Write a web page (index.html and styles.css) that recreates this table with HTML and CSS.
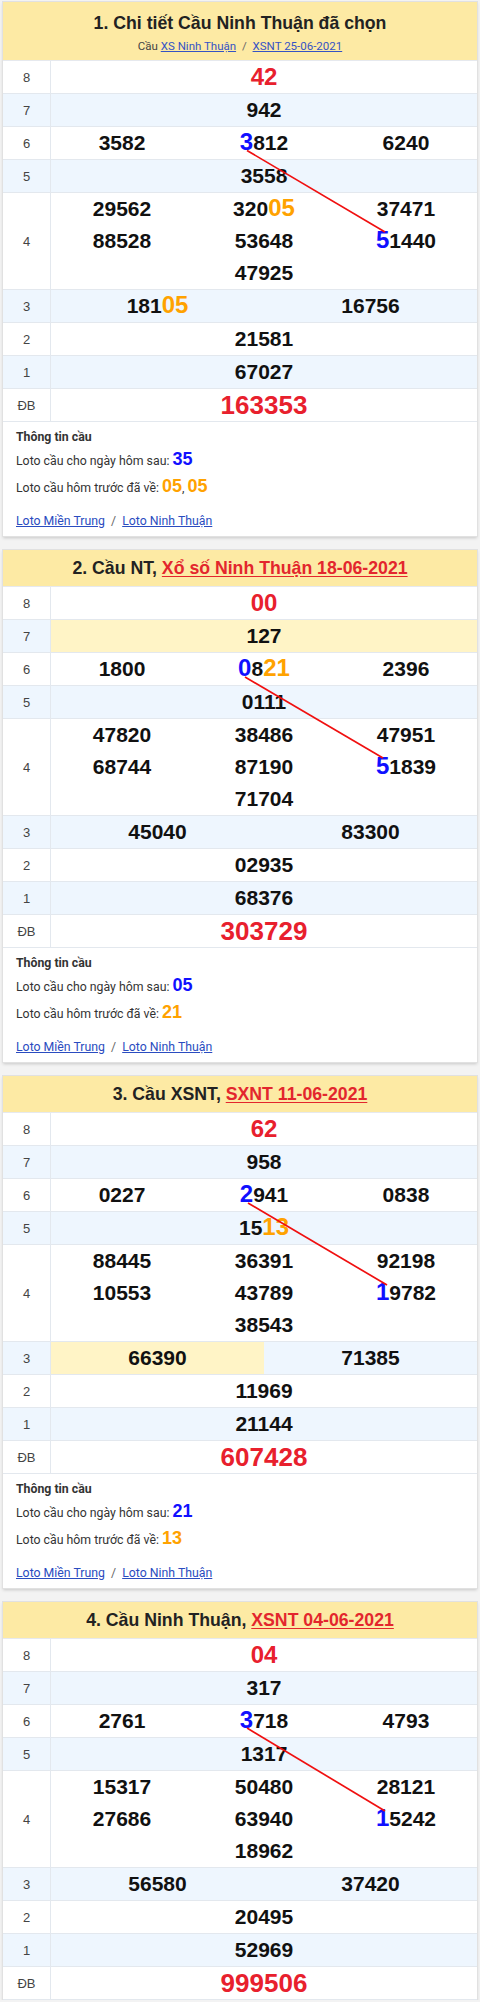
FILE: index.html
```html
<!DOCTYPE html>
<html lang="vi">
<head>
<meta charset="utf-8">
<title>Cầu Ninh Thuận</title>
<link rel="stylesheet" href="styles.css">
</head>
<body>
<main class="page">

<section class="card">
  <header class="head head-tall">
    <h2 class="title">1. Chi tiết Cầu Ninh Thuận đã chọn</h2>
    <div class="sub">Cầu <a href="#">XS Ninh Thuận</a> <span class="sep">/</span> <a href="#">XSNT 25-06-2021</a></div>
  </header>
  <div class="board">
    <div class="row"><div class="lbl">8</div><div class="nums"><span class="n red">42</span></div></div>
    <div class="row alt"><div class="lbl">7</div><div class="nums"><span class="n">942</span></div></div>
    <div class="row"><div class="lbl">6</div><div class="nums c3"><span class="n">3582</span><span class="n"><b class="blue">3</b>812</span><span class="n">6240</span></div></div>
    <div class="row alt"><div class="lbl">5</div><div class="nums"><span class="n">3558</span></div></div>
    <div class="row"><div class="lbl">4</div><div class="nums c3"><span class="n">29562</span><span class="n">320<b class="orange">05</b></span><span class="n">37471</span><span class="n">88528</span><span class="n">53648</span><span class="n"><b class="blue">5</b>1440</span><span class="n">47925</span></div></div>
    <div class="row alt"><div class="lbl">3</div><div class="nums c2"><span class="n">181<b class="orange">05</b></span><span class="n">16756</span></div></div>
    <div class="row"><div class="lbl">2</div><div class="nums"><span class="n">21581</span></div></div>
    <div class="row alt"><div class="lbl">1</div><div class="nums"><span class="n">67027</span></div></div>
    <div class="row"><div class="lbl">ĐB</div><div class="nums"><span class="n db">163353</span></div></div>
    <svg class="bridge" aria-hidden="true"><line x1="244" y1="89.5" x2="382" y2="171"/></svg>
  </div>
  <div class="info">
    <div class="info-title">Thông tin cầu</div>
    <div class="info-line">Loto cầu cho ngày hôm sau: <b class="v blue">35</b></div>
    <div class="info-line">Loto cầu hôm trước đã về: <b class="v orange">05</b>, <b class="v orange">05</b></div>
    <div class="links"><a href="#">Loto Miền Trung</a> <span class="sep">/</span> <a href="#">Loto Ninh Thuận</a></div>
  </div>
</section>

<section class="card">
  <header class="head">
    <h2 class="title">2. Cầu NT, <a class="red-link" href="#">Xổ số Ninh Thuận 18-06-2021</a></h2>
  </header>
  <div class="board">
    <div class="row"><div class="lbl">8</div><div class="nums"><span class="n red">00</span></div></div>
    <div class="row alt"><div class="lbl">7</div><div class="nums"><span class="n hit">127</span></div></div>
    <div class="row"><div class="lbl">6</div><div class="nums c3"><span class="n">1800</span><span class="n"><b class="blue">0</b>8<b class="orange">21</b></span><span class="n">2396</span></div></div>
    <div class="row alt"><div class="lbl">5</div><div class="nums"><span class="n">0111</span></div></div>
    <div class="row"><div class="lbl">4</div><div class="nums c3"><span class="n">47820</span><span class="n">38486</span><span class="n">47951</span><span class="n">68744</span><span class="n">87190</span><span class="n"><b class="blue">5</b>1839</span><span class="n">71704</span></div></div>
    <div class="row alt"><div class="lbl">3</div><div class="nums c2"><span class="n">45040</span><span class="n">83300</span></div></div>
    <div class="row"><div class="lbl">2</div><div class="nums"><span class="n">02935</span></div></div>
    <div class="row alt"><div class="lbl">1</div><div class="nums"><span class="n">68376</span></div></div>
    <div class="row"><div class="lbl">ĐB</div><div class="nums"><span class="n db">303729</span></div></div>
    <svg class="bridge" aria-hidden="true"><line x1="242" y1="90" x2="380" y2="171"/></svg>
  </div>
  <div class="info">
    <div class="info-title">Thông tin cầu</div>
    <div class="info-line">Loto cầu cho ngày hôm sau: <b class="v blue">05</b></div>
    <div class="info-line">Loto cầu hôm trước đã về: <b class="v orange">21</b></div>
    <div class="links"><a href="#">Loto Miền Trung</a> <span class="sep">/</span> <a href="#">Loto Ninh Thuận</a></div>
  </div>
</section>

<section class="card">
  <header class="head">
    <h2 class="title">3. Cầu XSNT, <a class="red-link" href="#">SXNT 11-06-2021</a></h2>
  </header>
  <div class="board">
    <div class="row"><div class="lbl">8</div><div class="nums"><span class="n red">62</span></div></div>
    <div class="row alt"><div class="lbl">7</div><div class="nums"><span class="n">958</span></div></div>
    <div class="row"><div class="lbl">6</div><div class="nums c3"><span class="n">0227</span><span class="n"><b class="blue">2</b>941</span><span class="n">0838</span></div></div>
    <div class="row alt"><div class="lbl">5</div><div class="nums"><span class="n">15<b class="orange">13</b></span></div></div>
    <div class="row"><div class="lbl">4</div><div class="nums c3"><span class="n">88445</span><span class="n">36391</span><span class="n">92198</span><span class="n">10553</span><span class="n">43789</span><span class="n"><b class="blue">1</b>9782</span><span class="n">38543</span></div></div>
    <div class="row alt"><div class="lbl">3</div><div class="nums c2"><span class="n hit">66390</span><span class="n">71385</span></div></div>
    <div class="row"><div class="lbl">2</div><div class="nums"><span class="n">11969</span></div></div>
    <div class="row alt"><div class="lbl">1</div><div class="nums"><span class="n">21144</span></div></div>
    <div class="row"><div class="lbl">ĐB</div><div class="nums"><span class="n db">607428</span></div></div>
    <svg class="bridge" aria-hidden="true"><line x1="245" y1="90" x2="384" y2="172"/></svg>
  </div>
  <div class="info">
    <div class="info-title">Thông tin cầu</div>
    <div class="info-line">Loto cầu cho ngày hôm sau: <b class="v blue">21</b></div>
    <div class="info-line">Loto cầu hôm trước đã về: <b class="v orange">13</b></div>
    <div class="links"><a href="#">Loto Miền Trung</a> <span class="sep">/</span> <a href="#">Loto Ninh Thuận</a></div>
  </div>
</section>

<section class="card">
  <header class="head">
    <h2 class="title">4. Cầu Ninh Thuận, <a class="red-link" href="#">XSNT 04-06-2021</a></h2>
  </header>
  <div class="board">
    <div class="row"><div class="lbl">8</div><div class="nums"><span class="n red">04</span></div></div>
    <div class="row alt"><div class="lbl">7</div><div class="nums"><span class="n">317</span></div></div>
    <div class="row"><div class="lbl">6</div><div class="nums c3"><span class="n">2761</span><span class="n"><b class="blue">3</b>718</span><span class="n">4793</span></div></div>
    <div class="row alt"><div class="lbl">5</div><div class="nums"><span class="n">1317</span></div></div>
    <div class="row"><div class="lbl">4</div><div class="nums c3"><span class="n">15317</span><span class="n">50480</span><span class="n">28121</span><span class="n">27686</span><span class="n">63940</span><span class="n"><b class="blue">1</b>5242</span><span class="n">18962</span></div></div>
    <div class="row alt"><div class="lbl">3</div><div class="nums c2"><span class="n">56580</span><span class="n">37420</span></div></div>
    <div class="row"><div class="lbl">2</div><div class="nums"><span class="n">20495</span></div></div>
    <div class="row alt"><div class="lbl">1</div><div class="nums"><span class="n">52969</span></div></div>
    <div class="row"><div class="lbl">ĐB</div><div class="nums"><span class="n db">999506</span></div></div>
    <svg class="bridge" aria-hidden="true"><line x1="244" y1="89" x2="382" y2="172"/></svg>
  </div>
</section>

</main>
</body>
</html>
```

FILE: styles.css
```css
* { box-sizing: border-box; }

html, body {
  margin: 0;
  padding: 0;
  background: #f3f3f3;
}

body {
  font-family: "Liberation Sans", Arial, sans-serif;
  color: #222;
}

.page {
  padding: 2px 3px 0;
  display: flex;
  flex-direction: column;
  gap: 14px;
}

.card {
  background: #fff;
  box-shadow: 0 0 0 1px #e1e1e1, 0 2px 3px rgba(0, 0, 0, 0.18);
}

/* header */
.head {
  background: #fdeaa4;
  height: 37px;
  display: flex;
  flex-direction: column;
  align-items: center;
  justify-content: center;
  border-bottom: 1px solid #e6e9ee;
}

.head-tall {
  height: 59px;
  justify-content: flex-start;
  padding-top: 10px;
}

.title {
  margin: 0;
  font-family: "Liberation Sans", Arial, sans-serif;
  font-size: 17.7px;
  font-weight: bold;
  line-height: 22px;
  color: #222;
  white-space: nowrap;
}

.red-link {
  color: #e3262d;
  text-decoration: underline;
  text-underline-offset: 2px;
}

.sub {
  margin-top: 4px;
  font-family: Roboto, "Liberation Sans", sans-serif;
  font-size: 11.5px;
  line-height: 16px;
  color: #444;
}

.sub a {
  color: #3553c4;
  text-decoration: underline;
}

.sep {
  color: #666;
  margin: 0 3px;
}

/* board */
.board {
  position: relative;
}

.row {
  display: grid;
  grid-template-columns: 48px 1fr;
  border-bottom: 1px solid #e3e8ee;
  min-height: 33px;
}

.row.alt {
  background: #eef6fe;
}

.lbl {
  border-right: 1px solid #e3e8ee;
  display: flex;
  align-items: center;
  justify-content: center;
  font-size: 13px;
  color: #444;
}

.nums {
  display: flex;
  flex-wrap: wrap;
  justify-content: center;
}

.n {
  width: 100%;
  height: 32px;
  text-align: center;
  font-weight: bold;
  font-size: 21px;
  line-height: 32px;
  color: #111;
}

.c3 .n { width: 33.333%; }
.c2 .n { width: 50%; }

.n.hit { background: #fff4c6; }

.n.red {
  color: #e8202d;
  font-size: 24px;
}

.n.db {
  color: #e8202d;
  font-size: 26px;
}

.n b {
  font-size: 24px;
  line-height: 1;
}

.blue { color: #1010ff; }
.orange { color: #ffa200; }

.bridge {
  position: absolute;
  left: 0;
  top: 0;
  width: 100%;
  height: 100%;
  pointer-events: none;
  overflow: visible;
}

.bridge line {
  stroke: #f01010;
  stroke-width: 1.7;
}

/* info */
.info {
  padding: 5px 13px 5px;
  font-family: Roboto, "Liberation Sans", sans-serif;
  font-size: 12.3px;
  color: #333;
}

.info-title {
  font-weight: bold;
  line-height: 20px;
}

.info-line {
  height: 26px;
  line-height: 26px;
  margin-top: 1px;
}

.info-line + .info-line { margin-top: 1px; }

.v {
  font-family: "Liberation Sans", Arial, sans-serif;
  font-size: 18px;
  font-weight: bold;
  line-height: 1;
}

.links {
  margin-top: 10px;
  line-height: 20px;
}

.links a {
  color: #2a4cc0;
  text-decoration: underline;
}
```
